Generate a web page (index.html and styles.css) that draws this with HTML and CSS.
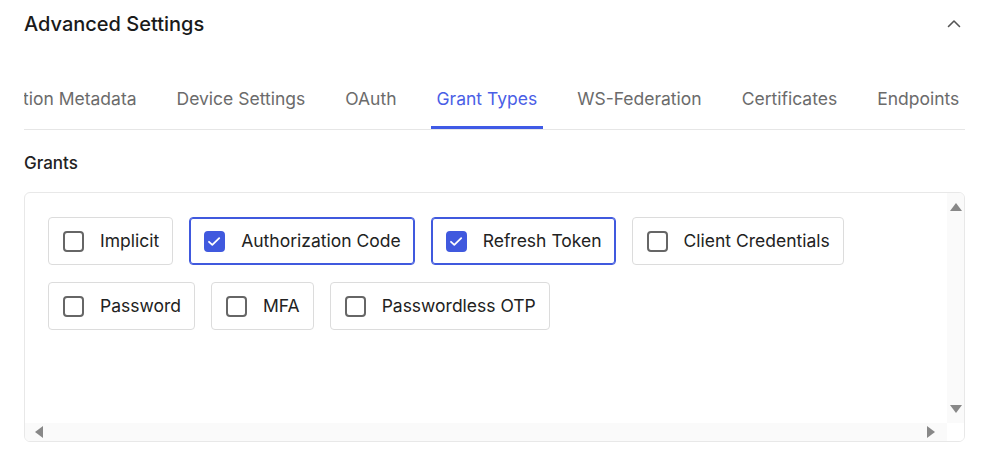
FILE: index.html
```html
<!DOCTYPE html>
<html lang="en">
<head>
<meta charset="utf-8">
<title>Advanced Settings</title>
<link rel="stylesheet" href="styles.css">
</head>
<body>
<section class="panel">
  <header class="panel-head">
    <h2 class="panel-title">Advanced Settings</h2>
    <button class="collapse-btn" aria-label="Collapse">
      <svg width="16" height="16" viewBox="0 0 16 16" fill="none"><path d="M2.5 10.5 L8 5 L13.5 10.5" stroke="#555" stroke-width="1.6" stroke-linecap="round" stroke-linejoin="round"/></svg>
    </button>
  </header>

  <nav class="tabs" id="tabs">
    <div class="tab-track">
      <a class="tab">Application Metadata</a>
      <a class="tab">Device Settings</a>
      <a class="tab">OAuth</a>
      <a class="tab active">Grant Types</a>
      <a class="tab">WS-Federation</a>
      <a class="tab">Certificates</a>
      <a class="tab">Endpoints</a>
    </div>
  </nav>

  <h3 class="section-label">Grants</h3>

  <div class="grants-box">
    <div class="grants-view">
      <div class="grants">
        <label class="grant"><span class="cb"></span><span class="grant-text">Implicit</span></label>
        <label class="grant checked"><span class="cb"><svg width="17" height="17" viewBox="0 0 17 17"><path d="M3 8.8 L6.3 11.9 L13.2 5.2" fill="none" stroke="#fff" stroke-width="1.8" stroke-linecap="round" stroke-linejoin="round"/></svg></span><span class="grant-text">Authorization Code</span></label>
        <label class="grant checked"><span class="cb"><svg width="17" height="17" viewBox="0 0 17 17"><path d="M3 8.8 L6.3 11.9 L13.2 5.2" fill="none" stroke="#fff" stroke-width="1.8" stroke-linecap="round" stroke-linejoin="round"/></svg></span><span class="grant-text">Refresh Token</span></label>
        <label class="grant"><span class="cb"></span><span class="grant-text">Client Credentials</span></label>
        <label class="grant"><span class="cb"></span><span class="grant-text">Password</span></label>
        <label class="grant"><span class="cb"></span><span class="grant-text">MFA</span></label>
        <label class="grant"><span class="cb"></span><span class="grant-text">Passwordless OTP</span></label>
      </div>
    </div>
    <div class="vbar"><span class="arr up"></span><span class="arr down"></span></div>
    <div class="hbar"><span class="arr left"></span><span class="arr right"></span></div>
    <div class="corner"></div>
  </div>
</section>
<script src="script.js"></script>
</body>
</html>
```

FILE: styles.css
```css
* { box-sizing: border-box; }
html, body { margin: 0; background: #fff; }
body {
  font-family: Inter, "Noto Sans", sans-serif;
  color: #1c1c1c;
  padding: 0 25px 0 24px;
}
.panel { width: 941px; }
.panel-head {
  height: 48px;
  display: flex;
  align-items: center;
  justify-content: space-between;
}
.panel-title {
  margin: 0;
  font-size: 20px;
  font-weight: 500;
  line-height: 28px;
  color: #1a1a1a;
}
.collapse-btn {
  border: 0;
  background: none;
  padding: 0;
  width: 16px;
  height: 16px;
  margin-right: 3px;
  display: flex;
}
.tabs {
  margin-top: 22px;
  overflow: hidden;
  border-bottom: 1px solid #e6e6e6;
}
.tab-track {
  display: flex;
  gap: 28px;
  width: max-content;
}
.tab {
  display: block;
  padding: 17px 6px 15px;
  border-bottom: 3px solid transparent;
  font-size: 17.5px;
  line-height: 24px;
  color: #6b6b6b;
  white-space: nowrap;
}
.tab.active {
  color: #4a5ee6;
  border-bottom-color: #3f5ae6;
}
.section-label {
  margin: 21px 0 17px;
  font-size: 17px;
  font-weight: 500;
  line-height: 24px;
  color: #222;
}
.grants-box {
  height: 250px;
  border: 1px solid #e8e8e8;
  border-radius: 6px;
  overflow: hidden;
  display: grid;
  grid-template-columns: 1fr 17px;
  grid-template-rows: 1fr 18px;
}
.grants-view {
  padding: 24px 23px;
  overflow: hidden;
}
.grants {
  display: flex;
  flex-wrap: wrap;
  gap: 17px 16px;
  width: 820px;
}
.grant {
  display: flex;
  align-items: center;
  gap: 16px;
  height: 48px;
  padding: 0 13px 0 14px;
  border: 1px solid #dcdcdc;
  border-radius: 4px;
  background: #fff;
  font-size: 17.5px;
  color: #222;
}
.grant.checked {
  border-color: #4059de;
  box-shadow: inset 0 0 0 1px #4059de;
}
.cb {
  width: 21px;
  height: 21px;
  border: 2px solid #666;
  border-radius: 4px;
  display: flex;
  align-items: center;
  justify-content: center;
}
.checked .cb {
  background: #4059de;
  border-color: #4059de;
}
.cb svg { display: block; }
.grant-text { line-height: 24px; }

.vbar {
  background: #fafafa;
  display: flex;
  flex-direction: column;
  justify-content: space-between;
  align-items: center;
  padding: 10px 0;
}
.hbar {
  background: #fafafa;
  display: flex;
  justify-content: space-between;
  align-items: center;
  padding: 0 12px 0 10px;
}
.corner { background: #fff; }
.arr { display: block; width: 0; height: 0; }
.arr.up {
  border-left: 6px solid transparent;
  border-right: 6px solid transparent;
  border-bottom: 8px solid #888;
}
.arr.down {
  border-left: 6px solid transparent;
  border-right: 6px solid transparent;
  border-top: 8px solid #888;
}
.arr.left {
  border-top: 6px solid transparent;
  border-bottom: 6px solid transparent;
  border-right: 8px solid #888;
}
.arr.right {
  border-top: 6px solid transparent;
  border-bottom: 6px solid transparent;
  border-left: 8px solid #888;
}
```

FILE: script.js
```js
(function () {
  var tabs = document.getElementById('tabs');
  tabs.scrollLeft = tabs.scrollWidth;
})();
```
